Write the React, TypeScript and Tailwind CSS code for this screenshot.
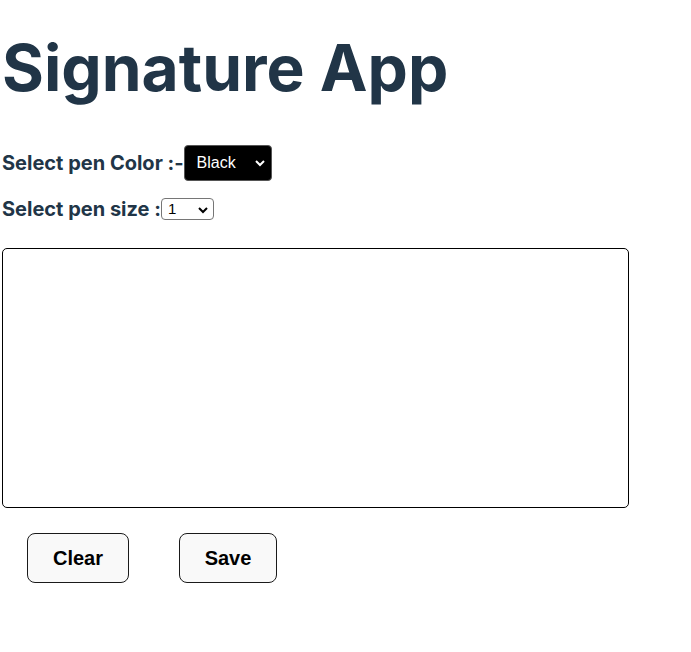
export default function App() {
  return (
    <div className="min-h-[652px] bg-white pl-[2px]" style={{ fontFamily: "Inter, 'Liberation Sans', sans-serif" }}>
      <h1 className="pt-[29px] text-[64px] font-bold leading-[77px] text-[#213547]">Signature App</h1>
      <div className="mt-[39px] flex items-center text-[20px] font-bold text-[#213547]">
        <span>Select pen Color :-</span>
        <div className="relative flex h-[36px] w-[88px] items-center rounded-[4px] border border-[#555] bg-black pl-[12px] text-[16px] font-normal text-white" style={{ fontFamily: "'Liberation Sans', Arial, sans-serif" }}>
          Black
          <svg className="absolute right-[6px] top-[13px]" width="10" height="8" viewBox="0 0 10 8"><path d="M1 2 L5 6 L9 2" stroke="white" strokeWidth="2" fill="none" /></svg>
        </div>
      </div>
      <div className="mt-[16px] flex h-[24px] items-center text-[20px] font-bold text-[#213547]">
        <span>Select pen size :</span>
        <div className="relative flex h-[22px] w-[53px] items-center rounded-[4px] border border-[#767676] bg-white pl-[6px] text-[15px] font-normal text-black" style={{ fontFamily: "'Liberation Sans', Arial, sans-serif" }}>
          1
          <svg className="absolute right-[5px] top-[7px]" width="10" height="8" viewBox="0 0 10 8"><path d="M1 2 L5 6 L9 2" stroke="black" strokeWidth="2" fill="none" /></svg>
        </div>
      </div>
      <div className="mt-[27px] h-[260px] w-[627px] rounded-[5px] border border-black bg-white" />
      <div className="ml-[25px] mt-[25px] flex gap-[50px]" style={{ fontFamily: "'Liberation Sans', Arial, sans-serif" }}>
        <button className="h-[50px] w-[102px] rounded-[8px] border border-[#1a1a1a] bg-[#f9f9f9] text-[20px] font-bold text-black">Clear</button>
        <button className="h-[50px] w-[98px] rounded-[8px] border border-[#1a1a1a] bg-[#f9f9f9] text-[20px] font-bold text-black">Save</button>
      </div>
    </div>
  );
}
